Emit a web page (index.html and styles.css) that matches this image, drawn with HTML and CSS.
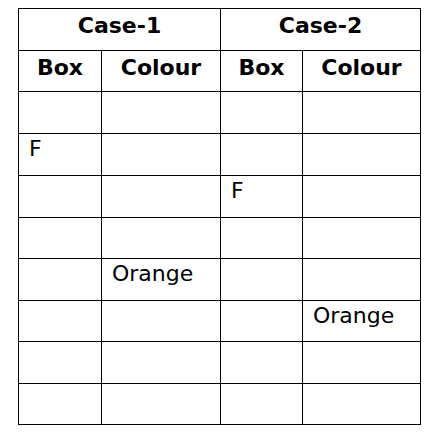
FILE: index.html
```html
<!DOCTYPE html>
<html>
<head>
<meta charset="utf-8">
<link rel="stylesheet" href="styles.css">
</head>
<body>
<div class="grid">
  <div class="cell head span2">Case-1</div>
  <div class="cell head span2">Case-2</div>
  <div class="cell head">Box</div>
  <div class="cell head">Colour</div>
  <div class="cell head">Box</div>
  <div class="cell head">Colour</div>

  <div class="cell"></div><div class="cell"></div><div class="cell"></div><div class="cell"></div>
  <div class="cell">F</div><div class="cell"></div><div class="cell"></div><div class="cell"></div>
  <div class="cell"></div><div class="cell"></div><div class="cell">F</div><div class="cell"></div>
  <div class="cell"></div><div class="cell"></div><div class="cell"></div><div class="cell"></div>
  <div class="cell"></div><div class="cell">Orange</div><div class="cell"></div><div class="cell"></div>
  <div class="cell"></div><div class="cell"></div><div class="cell"></div><div class="cell">Orange</div>
  <div class="cell"></div><div class="cell"></div><div class="cell"></div><div class="cell"></div>
  <div class="cell"></div><div class="cell"></div><div class="cell"></div><div class="cell"></div>
</div>
</body>
</html>
```
FILE: styles.css
```css
html, body {
  background: #fff;
}
body {
  margin: 8px 0 0 18px;
  font-family: "DejaVu Sans", Verdana, sans-serif;
  font-size: 22px;
  color: #000;
}
.grid {
  display: grid;
  width: max-content;
  grid-template-columns: 82px 118px 81px 117px;
  grid-template-rows: 41px 40px 41px 41px 41px 40px 41px 40px 41px 40px;
  gap: 1px;
  padding: 1px;
  background: #000;
}
.cell {
  background: #fff;
  padding: 2px 0 0 10px;
  white-space: nowrap;
  line-height: normal;
}
.head {
  font-weight: bold;
  text-align: center;
  padding: 4px 0 0 0;
}
.span2 {
  grid-column: span 2;
}
```
